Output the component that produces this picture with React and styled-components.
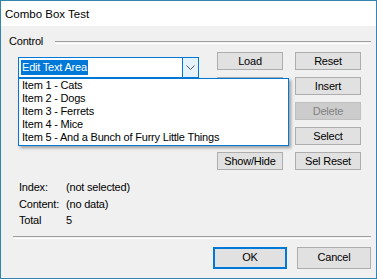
import React from 'react';
import styled, { createGlobalStyle } from 'styled-components';

const GlobalStyle = createGlobalStyle`
  html, body {
    margin: 0;
    padding: 0;
    background: #f0f0f0;
    overflow: hidden;
  }
`;

const Window = styled.div`
  width: 377px;
  height: 279px;
  box-sizing: border-box;
  border: 1px solid #3584ad;
  display: flex;
  flex-direction: column;
  font-family: 'Liberation Sans', Arial, sans-serif;
  font-size: 11px;
  letter-spacing: -0.2px;
  color: #000;
`;

const TitleBar = styled.div`
  height: 25px;
  flex: none;
  background: #fff;
  display: flex;
  align-items: center;
  padding-left: 4px;
  font-size: 11.5px;
  letter-spacing: 0;
`;

const Body = styled.div`
  flex: 1;
  background: #f0f0f0;
  display: flex;
  flex-direction: column;
`;

const GroupHeader = styled.div`
  margin-top: 8px;
  height: 14px;
  display: flex;
  align-items: center;
  padding-left: 8px;
  padding-right: 5px;
`;

const Etched = styled.div`
  height: 1px;
  border-top: 1px solid #a0a0a0;
  border-bottom: 1px solid #fff;
`;

const HeaderLine = styled(Etched)`
  flex: 1;
  margin-left: 12px;
  margin-top: 2px;
`;

const MainRow = styled.div`
  margin-top: 4px;
  display: flex;
  align-items: flex-start;
  padding-left: 17px;
`;

const ComboWrap = styled.div`
  position: relative;
  margin-top: 5px;
  width: 181px;
`;

const Combo = styled.div`
  height: 21px;
  box-sizing: border-box;
  border: 1px solid #0078d7;
  background: #fff;
  display: flex;
`;

const EditArea = styled.div`
  flex: 1;
  padding: 2px 0 0 2px;
`;

const Selected = styled.span`
  display: inline-block;
  height: 15px;
  line-height: 15px;
  padding: 0 1px;
  background: #0078d7;
  color: #fff;
`;

const ArrowBox = styled.div`
  width: 15px;
  border-left: 1px solid #0078d7;
  background: #e5f1fb;
  display: flex;
  align-items: center;
  justify-content: center;
`;

const DropList = styled.div`
  position: absolute;
  top: 21px;
  left: 0;
  width: 271px;
  box-sizing: border-box;
  border: 1px solid #0078d7;
  background: #fff;
  padding: 0 0 1px 3px;
  box-shadow: 2px 2px 3px rgba(0, 0, 0, 0.35);
  z-index: 2;
`;

const ListItem = styled.div`
  height: 13px;
  line-height: 13px;
  white-space: nowrap;
`;

const ButtonGrid = styled.div`
  margin-left: 18px;
  display: grid;
  grid-template-columns: 66px 66px;
  grid-auto-rows: 18px;
  column-gap: 12px;
  row-gap: 7px;
`;

const Button = styled.button`
  box-sizing: border-box;
  margin: 0;
  padding: 0;
  height: ${p => (p.$tall ? '22px' : '18px')};
  width: ${p => (p.$wide ? '74px' : 'auto')};
  border: ${p => (p.$default ? '2px solid #0078d7' : p.disabled ? '1px solid #bfbfbf' : '1px solid #adadad')};
  background: ${p => (p.disabled ? '#cccccc' : '#e1e1e1')};
  color: ${p => (p.disabled ? '#838383' : '#000')};
  font-family: 'Liberation Sans', Arial, sans-serif;
  font-size: 11px;
  letter-spacing: -0.2px;
  line-height: 1;
  text-align: center;
`;

const Info = styled.div`
  margin-top: 9px;
  padding-left: 18px;
  display: grid;
  grid-template-columns: 47px auto;
  grid-auto-rows: 16.5px;
  align-items: center;
`;

const Separator = styled(Etched)`
  margin: 7px 5px 0 12px;
`;

const Footer = styled.div`
  margin-top: 8px;
  display: flex;
  justify-content: flex-end;
  gap: 10px;
  padding-right: 5px;
`;

const items = [
  'Item 1 - Cats',
  'Item 2 - Dogs',
  'Item 3 - Ferrets',
  'Item 4 - Mice',
  'Item 5 - And a Bunch of Furry Little Things',
];

export default function App() {
  return (
    <>
      <GlobalStyle />
      <Window>
        <TitleBar>Combo Box Test</TitleBar>
        <Body>
          <GroupHeader>
            <span>Control</span>
            <HeaderLine />
          </GroupHeader>
          <MainRow>
            <ComboWrap>
              <Combo>
                <EditArea>
                  <Selected>Edit Text Area</Selected>
                </EditArea>
                <ArrowBox>
                  <svg width="9" height="5" viewBox="0 0 9 5">
                    <polyline points="0.5,0.5 4.5,4.5 8.5,0.5" fill="none" stroke="#555" strokeWidth="1" />
                  </svg>
                </ArrowBox>
              </Combo>
              <DropList>
                {items.map(it => (
                  <ListItem key={it}>{it}</ListItem>
                ))}
              </DropList>
            </ComboWrap>
            <ButtonGrid>
              <Button>Load</Button>
              <Button>Reset</Button>
              <Button />
              <Button>Insert</Button>
              <Button />
              <Button disabled>Delete</Button>
              <Button />
              <Button>Select</Button>
              <Button>Show/Hide</Button>
              <Button>Sel Reset</Button>
            </ButtonGrid>
          </MainRow>
          <Info>
            <span>Index:</span>
            <span>(not selected)</span>
            <span>Content:</span>
            <span>(no data)</span>
            <span>Total</span>
            <span>5</span>
          </Info>
          <Separator />
          <Footer>
            <Button $tall $wide $default>OK</Button>
            <Button $tall $wide>Cancel</Button>
          </Footer>
        </Body>
      </Window>
    </>
  );
}
